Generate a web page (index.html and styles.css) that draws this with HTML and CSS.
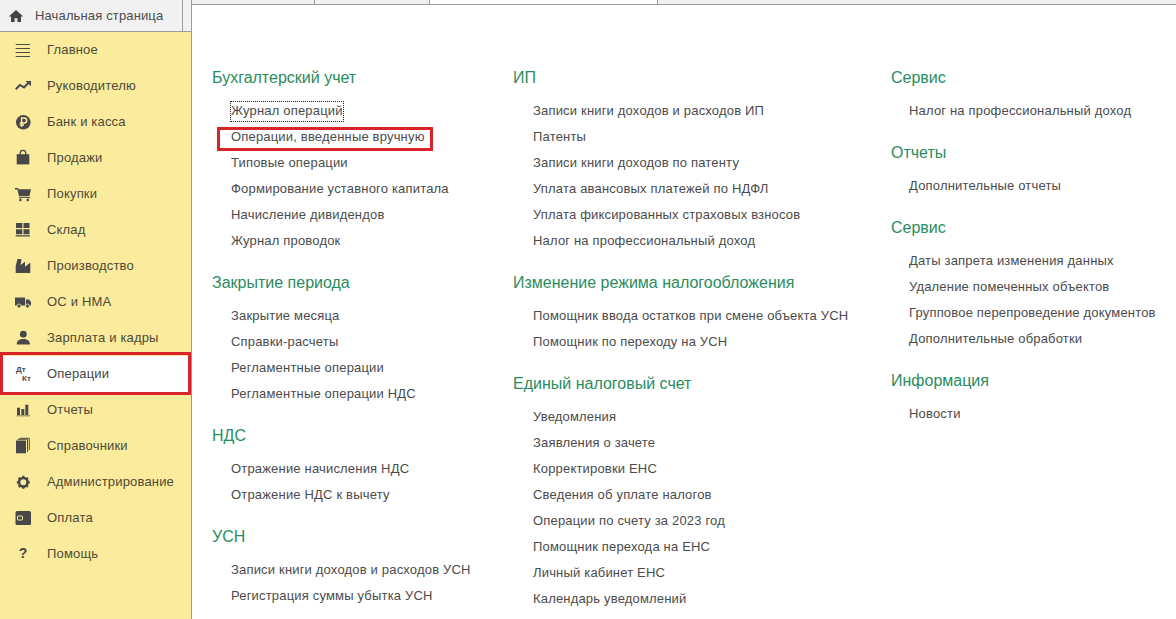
FILE: index.html
```html
<!DOCTYPE html>
<html lang="ru">
<head>
<meta charset="utf-8">
<title>Операции</title>
<link rel="stylesheet" href="styles.css">
</head>
<body>
<div class="page">
  <aside class="left">
    <div class="home-bar">
      <div class="home-tab">
        <svg class="home-icon" viewBox="0 0 16 16"><path d="M8 2 0.8 8.6h2.2V14h3.6v-3.8h2.8V14H13V8.6h2.2z"/></svg>
        <span>Начальная страница</span>
      </div>
    </div>
    <nav class="side">
      <div class="row"><svg class="ico" viewBox="0 0 18 18"><path class="ln" d="M1.700 3.500H16M1.700 7.500H16M1.700 11.500H16M1.700 15.500H16"/></svg><span>Главное</span></div>
      <div class="row"><svg class="ico" viewBox="0 0 18 18"><path class="th" d="M1.700 12.200 6 8l4 2.400 4.600-4.600"/><path d="M11.500 4H17v5.200z"/></svg><span>Руководителю</span></div>
      <div class="row"><svg class="ico" viewBox="0 0 18 18"><circle cx="9.300" cy="9.300" r="7.300"/><path class="rub" d="M7.600 14V5h2.600a2.500 2.500 0 0 1 0 5H5.800M5.800 12H10"/></svg><span>Банк и касса</span></div>
      <div class="row"><svg class="ico" viewBox="0 0 18 18"><path d="M2.700 5.200h12.600v10.200H2.700z"/><path class="hd" d="M6.200 8V4.200a2.800 2.800 0 0 1 5.600 0V8"/></svg><span>Продажи</span></div>
      <div class="row"><svg class="ico" viewBox="0 0 18 18"><path d="M1 3h3l.6 1.200H17l-1.600 7H5L3.400 4.400H1z"/><path d="M5 12h11v.9H5z"/><circle cx="6.400" cy="14.900" r="1.300"/><circle cx="13.800" cy="14.900" r="1.300"/></svg><span>Покупки</span></div>
      <div class="row"><svg class="ico" viewBox="0 0 18 18"><path d="M2 2h6.300v5H2zM9.500 2H15.500v5H9.500zM2 8.200h6.300v5H2zM9.500 8.200H15.500v5H9.500zM1.700 14.300H16V15.500H1.700z"/></svg><span>Склад</span></div>
      <div class="row"><svg class="ico" viewBox="0 0 18 18"><path d="M1.700 16V9L3.500 2H7.500L6.500 8 11 4.800V9.800L16.300 5.500V16z"/></svg><span>Производство</span></div>
      <div class="row"><svg class="ico" viewBox="0 0 18 18"><path d="M1 4.500H11V12.500H1z"/><path d="M11.800 6.500H15L17 9V12.500H11.800z"/><circle class="wh" cx="5" cy="13" r="2"/><circle class="wh" cx="13.500" cy="13" r="2"/></svg><span>ОС и НМА</span></div>
      <div class="row"><svg class="ico" viewBox="0 0 18 18"><circle cx="9.300" cy="5.200" r="3.400"/><path d="M2.700 15.400C2.700 11.500 5.500 10 9.300 10S15.900 11.500 15.900 15.400z"/></svg><span>Зарплата и кадры</span></div>
      <div class="row row-on">
        <div class="dtkt"><span class="dt">Дт</span><span class="kt">Кт</span></div>
        <span>Операции</span>
      </div>
      <div class="row"><svg class="ico" viewBox="0 0 18 18"><path d="M3 6.700h3V14H3zM7.300 8h3V14h-3zM11.300 3.700h3V14h-3zM2.700 14.400H16V15.300H2.700z"/></svg><span>Отчеты</span></div>
      <div class="row"><svg class="ico" viewBox="0 0 18 18"><path d="M2 3.500H12V16.300H2z"/><path class="ln" d="M3.500 2.300H13.500V15M5.500 1.300H15.300V13"/></svg><span>Справочники</span></div>
      <div class="row"><svg class="ico" viewBox="0 0 18 18"><circle class="gear" cx="9.300" cy="9.300" r="4.300"/><path class="teeth" d="M9.300 2.800V5M9.300 13.600V15.800M2.800 9.300H5M13.600 9.300H15.800M4.700 4.700 6.200 6.200M12.400 12.400 13.900 13.900M13.900 4.700 12.400 6.200M6.200 12.400 4.700 13.900"/></svg><span>Администрирование</span></div>
      <div class="row"><svg class="ico" viewBox="0 0 18 18"><rect x="1.500" y="2" width="15.500" height="14" rx="1.500"/><rect class="slot" x="3.500" y="7" width="5" height="4" rx="0.800"/></svg><span>Оплата</span></div>
      <div class="row"><span class="help">?</span><span>Помощь</span></div>
    </nav>
  </aside>
  <main class="right">
    <div class="tabs">
      <div class="tab tab-a"></div>
      <div class="tab tab-b"></div>
      <div class="tab tab-c"></div>
      <div class="tab tab-d"></div>
    </div>
    <div class="cols">
      <div class="col col-1">
        <section>
          <h2>Бухгалтерский учет</h2>
          <ul>
            <li><a class="focus">Журнал операций</a></li>
            <li><a class="marked">Операции, введенные вручную</a></li>
            <li><a>Типовые операции</a></li>
            <li><a>Формирование уставного капитала</a></li>
            <li><a>Начисление дивидендов</a></li>
            <li><a>Журнал проводок</a></li>
          </ul>
        </section>
        <section>
          <h2>Закрытие периода</h2>
          <ul>
            <li><a>Закрытие месяца</a></li>
            <li><a>Справки-расчеты</a></li>
            <li><a>Регламентные операции</a></li>
            <li><a>Регламентные операции НДС</a></li>
          </ul>
        </section>
        <section>
          <h2>НДС</h2>
          <ul>
            <li><a>Отражение начисления НДС</a></li>
            <li><a>Отражение НДС к вычету</a></li>
          </ul>
        </section>
        <section>
          <h2>УСН</h2>
          <ul>
            <li><a>Записи книги доходов и расходов УСН</a></li>
            <li><a>Регистрация суммы убытка УСН</a></li>
          </ul>
        </section>
      </div>
      <div class="col col-2">
        <section>
          <h2>ИП</h2>
          <ul>
            <li><a>Записи книги доходов и расходов ИП</a></li>
            <li><a>Патенты</a></li>
            <li><a>Записи книги доходов по патенту</a></li>
            <li><a>Уплата авансовых платежей по НДФЛ</a></li>
            <li><a>Уплата фиксированных страховых взносов</a></li>
            <li><a>Налог на профессиональный доход</a></li>
          </ul>
        </section>
        <section>
          <h2>Изменение режима налогообложения</h2>
          <ul>
            <li><a>Помощник ввода остатков при смене объекта УСН</a></li>
            <li><a>Помощник по переходу на УСН</a></li>
          </ul>
        </section>
        <section>
          <h2>Единый налоговый счет</h2>
          <ul>
            <li><a>Уведомления</a></li>
            <li><a>Заявления о зачете</a></li>
            <li><a>Корректировки ЕНС</a></li>
            <li><a>Сведения об уплате налогов</a></li>
            <li><a>Операции по счету за 2023 год</a></li>
            <li><a>Помощник перехода на ЕНС</a></li>
            <li><a>Личный кабинет ЕНС</a></li>
            <li><a>Календарь уведомлений</a></li>
          </ul>
        </section>
      </div>
      <div class="col col-3">
        <section>
          <h2>Сервис</h2>
          <ul>
            <li><a>Налог на профессиональный доход</a></li>
          </ul>
        </section>
        <section>
          <h2>Отчеты</h2>
          <ul>
            <li><a>Дополнительные отчеты</a></li>
          </ul>
        </section>
        <section>
          <h2>Сервис</h2>
          <ul>
            <li><a>Даты запрета изменения данных</a></li>
            <li><a>Удаление помеченных объектов</a></li>
            <li><a>Групповое перепроведение документов</a></li>
            <li><a>Дополнительные обработки</a></li>
          </ul>
        </section>
        <section>
          <h2>Информация</h2>
          <ul>
            <li><a>Новости</a></li>
          </ul>
        </section>
      </div>
    </div>
  </main>
</div>
</body>
</html>
```
FILE: styles.css
```css
* { box-sizing: border-box; }
html, body { margin: 0; padding: 0; height: 100%; overflow: hidden; background: #fff; }
body { font-family: "Liberation Sans", Arial, sans-serif; color: #4b4b4b; }
.page { display: flex; width: 1176px; height: 619px; }

.left { width: 192px; flex: none; display: flex; flex-direction: column; }
.home-bar { height: 32px; background: #f1f1f1; border-bottom: 1px solid #9c9c9c; border-right: 1px solid #9c9c9c; }
.home-tab { width: 183px; height: 31px; border-right: 1px solid #9c9c9c; display: flex; align-items: center; padding-left: 8px; font-size: 13px; letter-spacing: 0.14px; color: #4b4b4b; }
.home-icon { width: 16px; height: 16px; fill: #444; margin-right: 11px; }

.side { flex: 1; background: #fbeb9c; border-right: 1px solid #a9995c; }
.row { height: 36px; display: flex; align-items: center; padding-left: 14px; font-size: 13px; letter-spacing: 0.18px; color: #4d4a38; position: relative; }
.row > span { margin-bottom: 2px; }
.ico { width: 18px; height: 18px; flex: none; margin-right: 15px; fill: #48484a; }
.ico .ln { fill: none; stroke: #4e4c3e; stroke-width: 1; }
.ico .th { fill: none; stroke: #48484a; stroke-width: 2; }
.ico .rub { fill: none; stroke: #fbeb9c; stroke-width: 1.5; }
.ico .hd { fill: none; stroke: #48484a; stroke-width: 1.3; }
.ico .wh { stroke: #fbeb9c; stroke-width: 0.8; }
.ico .gear { fill: none; stroke: #48484a; stroke-width: 2.6; }
.ico .teeth { fill: none; stroke: #48484a; stroke-width: 2.2; }
.ico .slot { fill: none; stroke: #fbeb9c; stroke-width: 1; }
.row-on { background: #fff; color: #454545; }
.row-on::after { content: ""; position: absolute; left: 0; right: 0; top: -4px; bottom: -3px; border: 3px solid #d9232a; }
.dtkt { width: 18px; height: 20px; flex: none; margin-right: 15px; display: flex; flex-direction: column; font-size: 8px; font-weight: bold; line-height: 9px; color: #4a4a4a; letter-spacing: 0; padding-top: 1px; }
.dt { margin-left: 2px; }
.kt { margin-left: 8px; }
.help { width: 18px; flex: none; margin-right: 15px; text-align: center; font-size: 14px; font-weight: bold; color: #444; letter-spacing: 0; }

.right { flex: 1; min-width: 0; display: flex; flex-direction: column; }
.tabs { display: flex; height: 5px; flex: none; border-bottom: 1px solid #9c9c9c; }
.tab { height: 4px; background: #f1f1f1; border-right: 1px solid #9c9c9c; }
.tab-a { width: 123px; }
.tab-b { width: 115px; }
.tab-c { width: 228px; background: #fff; }
.tab-d { flex: 1; border-right: 0; }

.cols { display: flex; padding: 63px 0 0 20px; }
.col { flex: none; }
.col-1 { width: 301px; }
.col-2 { width: 378px; }
.col-2 ul { padding-left: 20px; }
.col-3 { flex: 1; }
.col-3 ul { padding-left: 18px; }

section { margin-bottom: 19px; }
h2 { margin: 0 0 10px; font-size: 16px; font-weight: normal; line-height: 20px; color: #2a8c5e; }
ul { list-style: none; margin: 0; padding: 0 0 0 19px; }
li { height: 26px; line-height: 26px; font-size: 13px; letter-spacing: 0.18px; color: #4b4b4b; white-space: nowrap; }
a { position: relative; display: inline-block; }
.focus::after { content: ""; position: absolute; left: -1px; right: -1px; top: 3px; bottom: 2px; border: 1px dotted #222; }
.marked::after { content: ""; position: absolute; left: -14px; right: -8px; top: 3px; bottom: -1px; border: 3px solid #d9232a; }
```
